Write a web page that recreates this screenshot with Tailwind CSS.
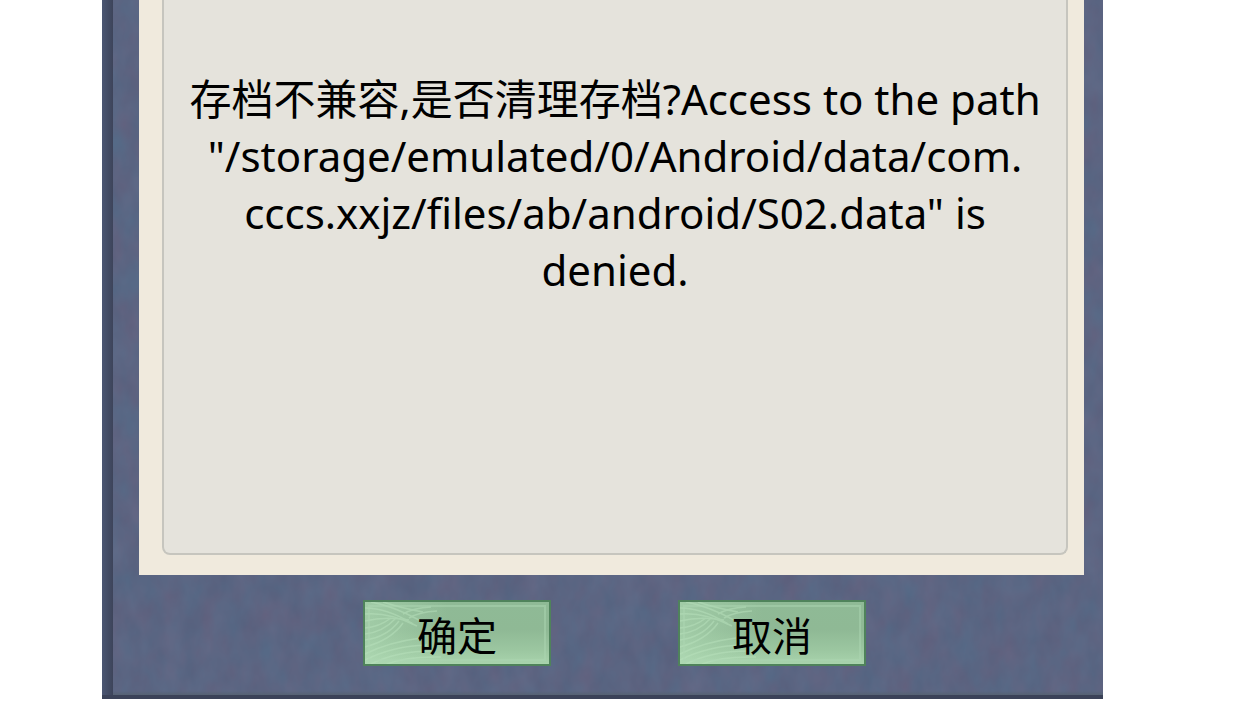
<!DOCTYPE html>
<html lang="zh-CN">
<head>
    <meta charset="UTF-8">
    <meta name="viewport" content="width=device-width, initial-scale=1.0">
    <title>存档提示</title>
    <script src="https://cdn.jsdelivr.net/npm/@tailwindcss/browser@4"></script>
</head>
<body class="bg-white text-black font-['Noto_Sans','Noto_Sans_CJK_SC',sans-serif]">

<!-- Shared drawings -->
<svg class="absolute w-0 h-0" aria-hidden="true">
    <defs>
        <linearGradient id="btn-fill" x1="0" y1="0" x2="0" y2="1">
            <stop offset="0" stop-color="#8fba96"/>
            <stop offset="0.45" stop-color="#8fb995"/>
            <stop offset="0.75" stop-color="#9bc6a0"/>
            <stop offset="1" stop-color="#aad5ae"/>
        </linearGradient>
        <linearGradient id="btn-shine" x1="0" y1="0" x2="1" y2="0">
            <stop offset="0" stop-color="#b4dfb9" stop-opacity="0.5"/>
            <stop offset="0.45" stop-color="#b4dfb9" stop-opacity="0"/>
        </linearGradient>
    </defs>
    <symbol id="btn-bg" viewBox="0 0 188 66" preserveAspectRatio="none">
        <rect width="188" height="66" fill="url(#btn-fill)"/>
        <rect width="188" height="66" fill="url(#btn-shine)"/>
        <g fill="none" stroke="#b9e2bd" stroke-width="1.5" opacity="0.5">
            <path d="M2 8Q24 8 50 24"/>
            <path d="M2 14Q26 12 54 26"/>
            <path d="M8 2Q30 6 56 20"/>
            <path d="M20 2Q38 8 60 12"/>
            <path d="M2 21Q22 16 46 20"/>
            <path d="M2 28Q16 27 28 18"/>
            <path d="M2 34Q20 32 32 19"/>
            <path d="M2 40Q24 37 36 21"/>
            <path d="M2 47Q28 40 40 23"/>
            <path d="M2 54Q26 42 58 38"/>
            <path d="M2 60Q30 46 64 45"/>
            <path d="M8 64Q34 51 70 51"/>
            <path d="M24 64Q44 56 78 57"/>
            <path d="M40 14Q50 8 68 7"/>
            <path d="M46 18Q56 12 74 11"/>
        </g>
        <rect x="6" y="6" width="176" height="54" fill="none" stroke="#acd5b1" stroke-width="2" opacity="0.5"/>
        <rect x="1" y="1" width="186" height="64" fill="none" stroke="#4f835b" stroke-width="2"/>
    </symbol>
</svg>

<main class="pl-[102px] pr-[157px]">
    <section class="relative bg-[#5b6582] border-b-4 border-[#3b4258] pl-[37px] pr-[19px] pb-[29px]" role="dialog" aria-labelledby="message">

        <!-- Paper grain and left edge shadow -->
        <svg class="absolute inset-0 w-full h-full" aria-hidden="true">
            <filter id="grain" x="0" y="0" width="100%" height="100%" color-interpolation-filters="sRGB">
                <feTurbulence type="fractalNoise" baseFrequency="0.05 0.03" numOctaves="3" seed="4"/>
                <feColorMatrix values="0.07 0 0 0 0.322  0 0.05 0 0 0.371  0 0.05 0 0 0.485  0 0 0 0 1"/>
            </filter>
            <rect width="100%" height="100%" filter="url(#grain)"/>
        </svg>
        <div class="absolute inset-y-0 left-0 w-[11px] bg-linear-to-r from-[#4b5672] to-[#3d445a]"></div>
        <div class="absolute bottom-0 left-[11px] right-0 h-1 bg-linear-to-b from-[#5b6582]/0 to-[#566273]"></div>

        <div class="relative bg-[#f0eadd] pl-[23px] pr-4 pb-5">
            <div class="min-h-[555px] rounded-b-lg border-2 border-t-0 border-[#c6c5be] bg-[#e5e3dc] pt-[70px] text-center">
                <p id="message" class="text-[42px] leading-[57px] whitespace-nowrap">
                    存档不兼容,是否清理存档?Access to the path<br>
                    "/storage/emulated/0/Android/data/com.<br>
                    cccs.xxjz/files/ab/android/S02.data" is<br>
                    denied.
                </p>
            </div>
        </div>

        <div class="relative flex justify-center gap-[127px] pt-[25px] pl-1.5">
            <button type="button" class="relative h-[66px] w-[188px] cursor-pointer pt-1.5 text-[40px] leading-none">
                <svg class="absolute inset-0 w-full h-full" aria-hidden="true"><use href="#btn-bg"/></svg>
                <span class="relative">确定</span>
            </button>
            <button type="button" class="relative h-[66px] w-[188px] cursor-pointer pt-1.5 text-[40px] leading-none">
                <svg class="absolute inset-0 w-full h-full" aria-hidden="true"><use href="#btn-bg"/></svg>
                <span class="relative">取消</span>
            </button>
        </div>
    </section>
</main>

</body>
</html>
